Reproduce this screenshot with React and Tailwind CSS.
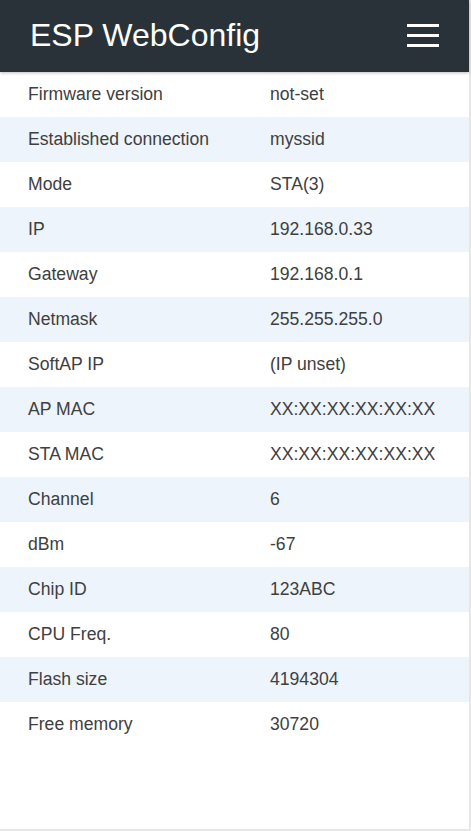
const ROWS = [
  ['Firmware version', 'not-set'],
  ['Established connection', 'myssid'],
  ['Mode', 'STA(3)'],
  ['IP', '192.168.0.33'],
  ['Gateway', '192.168.0.1'],
  ['Netmask', '255.255.255.0'],
  ['SoftAP IP', '(IP unset)'],
  ['AP MAC', 'XX:XX:XX:XX:XX:XX'],
  ['STA MAC', 'XX:XX:XX:XX:XX:XX'],
  ['Channel', '6'],
  ['dBm', '-67'],
  ['Chip ID', '123ABC'],
  ['CPU Freq.', '80'],
  ['Flash size', '4194304'],
  ['Free memory', '30720'],
]

export default function App() {
  return (
    <div className="w-[471px] h-[831px] bg-[#e6e6e6] overflow-hidden" style={{ fontFamily: '"Liberation Sans", Arial, sans-serif' }}>
      <div className="w-[469px] h-[829px] bg-white flex flex-col">
        <header className="relative z-10 h-[72px] shrink-0 bg-[#283238] flex items-center justify-between pl-[30px] pr-[30px] shadow-[0_1px_3px_rgba(0,0,0,0.25)]">
          <h1 className="text-white text-[32px] leading-none pb-[2px]">ESP WebConfig</h1>
          <div className="flex flex-col gap-[7px] -mt-[2px]">
            <span className="block w-[32px] h-[3px] bg-white" />
            <span className="block w-[32px] h-[3px] bg-white" />
            <span className="block w-[32px] h-[3px] bg-white" />
          </div>
        </header>
        <div className="flex flex-col">
          {ROWS.map(([label, value], i) => (
            <div
              key={label}
              className={`grid grid-cols-[242px_1fr] h-[45px] items-center text-[17.6px] text-[#404040] ${i % 2 ? 'bg-[#edf4fc]' : 'bg-white'}`}
            >
              <span className="pl-[28px]">{label}</span>
              <span className="pl-[28px]">{value}</span>
            </div>
          ))}
        </div>
      </div>
    </div>
  )
}
